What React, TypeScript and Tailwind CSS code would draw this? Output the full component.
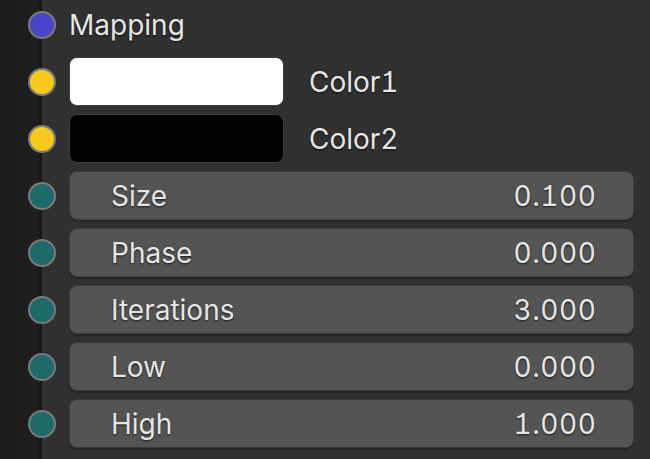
import React from 'react';

type Field = { label: string; value: string };

const fields: Field[] = [
  { label: 'Size', value: '0.100' },
  { label: 'Phase', value: '0.000' },
  { label: 'Iterations', value: '3.000' },
  { label: 'Low', value: '0.000' },
  { label: 'High', value: '1.000' },
];

function Socket({ color }: { color: string }) {
  return (
    <div
      className="ml-[28px] mr-[13px] h-[28px] w-[28px] shrink-0 rounded-full border-[2.5px] border-[#7a7a7a]"
      style={{ backgroundColor: color }}
    />
  );
}

const txt =
  "text-[28px] text-[#e6e6e6] [text-shadow:0_1px_2px_rgba(0,0,0,0.7)] [font-feature-settings:'tnum','cv01']";

export default function App() {
  return (
    <div
      className="h-[459px] w-[650px] overflow-hidden bg-[linear-gradient(to_right,#1b1b1b_0px,#1e1e1e_36px,#161616_42px,#303030_42px)]"
      style={{ fontFamily: 'Inter, "Noto Sans", sans-serif' }}
    >
      {/* Mapping */}
      <div className="mb-[8px] flex h-[49px] items-center">
        <Socket color="#4646c6" />
        <span className={txt}>Mapping</span>
      </div>

      {/* Colors */}
      <div className="mb-[8px] flex h-[49px] items-center">
        <Socket color="#f7c81e" />
        <div className="h-[49px] w-[215px] rounded-[8px] border border-[#3c3c3c] bg-white" />
        <span className={`ml-[25px] ${txt}`}>Color1</span>
      </div>
      <div className="mb-[8px] flex h-[49px] items-center">
        <Socket color="#f7c81e" />
        <div className="h-[49px] w-[215px] rounded-[8px] border border-[#3c3c3c] bg-black" />
        <span className={`ml-[25px] ${txt}`}>Color2</span>
      </div>

      {/* Number fields */}
      {fields.map((f) => (
        <div key={f.label} className="mb-[8px] flex h-[49px] items-center">
          <Socket color="#1d6a6a" />
          <div className="flex h-[49px] w-[565px] items-center justify-between rounded-[8px] border border-[#3a3a3a] bg-[#545454] pl-[41px] pr-[37px] shadow-[0_2px_0_#262626]">
            <span className={txt}>{f.label}</span>
            <span className={`${txt} tracking-[0.6px] -mr-[0.6px]`}>{f.value}</span>
          </div>
        </div>
      ))}
    </div>
  );
}
